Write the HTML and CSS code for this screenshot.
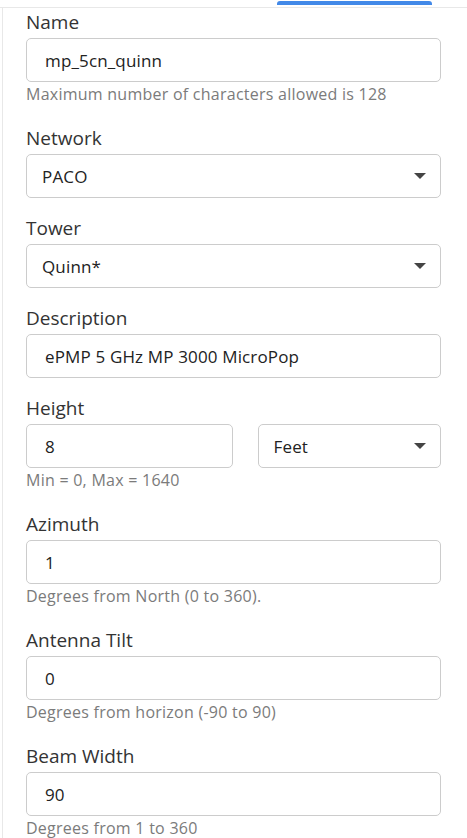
FILE: index.html
```html
<!DOCTYPE html>
<html lang="en">
<head>
<meta charset="utf-8">
<title>Edit</title>
<link rel="stylesheet" href="styles.css">
</head>
<body>
<div class="tabs">
  <div class="tab-indicator"></div>
</div>
<div class="panel">
  <form class="form">
    <div class="group">
      <label class="label">Name</label>
      <div class="control">mp_5cn_quinn</div>
      <div class="help">Maximum number of characters allowed is 128</div>
    </div>
    <div class="group">
      <label class="label">Network</label>
      <div class="control select"><span class="sel-text">PACO</span><span class="caret"></span></div>
    </div>
    <div class="group">
      <label class="label">Tower</label>
      <div class="control select"><span class="sel-text">Quinn*</span><span class="caret"></span></div>
    </div>
    <div class="group">
      <label class="label">Description</label>
      <div class="control">ePMP 5 GHz MP 3000 MicroPop</div>
    </div>
    <div class="group">
      <label class="label">Height</label>
      <div class="row">
        <div class="control">8</div>
        <div class="control select"><span class="sel-text">Feet</span><span class="caret"></span></div>
      </div>
      <div class="help">Min = 0, Max = 1640</div>
    </div>
    <div class="group">
      <label class="label">Azimuth</label>
      <div class="control">1</div>
      <div class="help">Degrees from North (0 to 360).</div>
    </div>
    <div class="group">
      <label class="label">Antenna Tilt</label>
      <div class="control">0</div>
      <div class="help">Degrees from horizon (-90 to 90)</div>
    </div>
    <div class="group">
      <label class="label">Beam Width</label>
      <div class="control">90</div>
      <div class="help">Degrees from 1 to 360</div>
    </div>
  </form>
</div>
</body>
</html>
```
FILE: styles.css
```css
html, body {
  margin: 0;
  padding: 0;
  background: #fff;
  height: 838px;
  overflow: hidden;
}
body {
  font-family: "Open Sans", "Liberation Sans", sans-serif;
  color: #333;
}
.tabs {
  height: 7px;
  border-bottom: 1px solid #e8e8e8;
  display: flex;
  align-items: flex-start;
}
.tab-indicator {
  margin-left: 277px;
  margin-top: 1px;
  width: 155px;
  height: 4px;
  background: #4289e8;
  border-radius: 3px 3px 0 0;
}
.panel {
  margin-left: 2px;
  border-left: 1px solid #e8e8e8;
  height: 830px;
}
.form {
  padding: 2px 26px 0 23px;
  display: flex;
  flex-direction: column;
  gap: 18px;
}
.group {
  display: flex;
  flex-direction: column;
}
.label {
  font-size: 19px;
  line-height: 24px;
  margin-bottom: 4px;
  color: #333;
}
.control {
  box-sizing: border-box;
  height: 44px;
  border: 1px solid #cccccc;
  border-radius: 5px;
  padding: 0 18px;
  display: flex;
  align-items: center;
  font-size: 17px;
  letter-spacing: 0.15px;
  color: #222;
}
.select {
  padding: 0 14px 0 15px;
  justify-content: space-between;
}
.caret {
  width: 0;
  height: 0;
  border-left: 6px solid transparent;
  border-right: 6px solid transparent;
  border-top: 6px solid #444;
}
.row {
  display: grid;
  grid-template-columns: 206fr 183fr;
  column-gap: 25px;
}
.help {
  font-size: 16px;
  line-height: 20px;
  margin: 2px 0 4px;
  letter-spacing: 0.25px;
  color: #7b7b7b;
}
```
